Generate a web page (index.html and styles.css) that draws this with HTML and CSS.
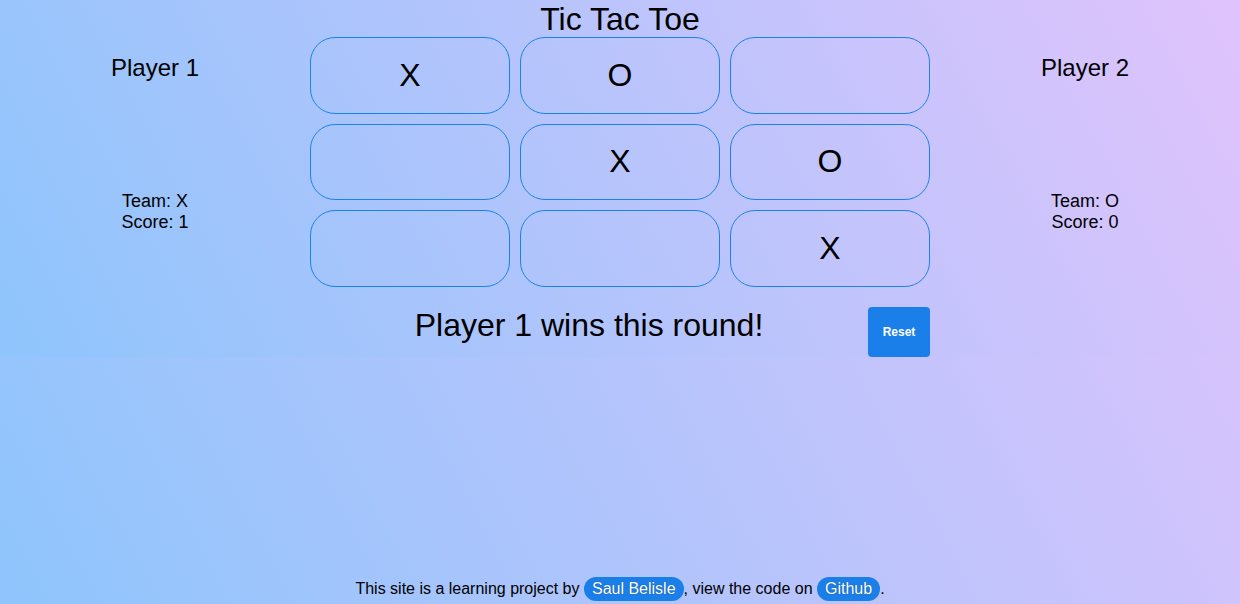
FILE: index.html
```html
<!DOCTYPE html>
<html lang="en">
<head>
<meta charset="utf-8">
<title>Tic Tac Toe</title>
<link rel="stylesheet" href="styles.css">
</head>
<body>
<main class="game">
  <h1 class="title">Tic Tac Toe</h1>
  <div class="layout">
    <aside class="player">
      <h2 class="player-name">Player 1</h2>
      <div class="stats">
        <div>Team: X</div>
        <div>Score: 1</div>
      </div>
    </aside>
    <section class="board">
      <div class="grid">
        <button class="cell">X</button>
        <button class="cell">O</button>
        <button class="cell"></button>
        <button class="cell"></button>
        <button class="cell">X</button>
        <button class="cell">O</button>
        <button class="cell"></button>
        <button class="cell"></button>
        <button class="cell">X</button>
      </div>
      <div class="status-row">
        <p class="message">Player 1 wins this round!</p>
        <button class="reset">Reset</button>
      </div>
    </section>
    <aside class="player">
      <h2 class="player-name">Player 2</h2>
      <div class="stats">
        <div>Team: O</div>
        <div>Score: 0</div>
      </div>
    </aside>
  </div>
</main>
<footer class="footer">
  This site is a learning project by <a class="pill" href="#">Saul Belisle</a>, view the code on <a class="pill" href="#">Github</a>.
</footer>
</body>
</html>
```
FILE: styles.css
```css
html, body {
  margin: 0;
  padding: 0;
}
body {
  min-height: 100vh;
  display: flex;
  flex-direction: column;
  font-family: "Liberation Sans", Arial, sans-serif;
  color: #000;
  background: linear-gradient(62deg, #8ec5fc 0%, #e0c3fc 100%);
}
.game {
  background: linear-gradient(62deg, #8ec5fc 0%, #e0c3fc 100%);
}
.title {
  margin: 0;
  font-size: 32px;
  font-weight: normal;
  text-align: center;
  line-height: 37px;
  padding-top: 1px;
  height: 36px;
}
.layout {
  display: grid;
  grid-template-columns: 310px 620px 310px;
}
.player {
  text-align: center;
}
.player-name {
  margin: 16.5px 0 0;
  font-size: 24px;
  font-weight: normal;
  line-height: 28px;
}
.stats {
  margin-top: 109px;
  font-size: 18px;
  line-height: 21px;
}
.grid {
  display: grid;
  grid-template-columns: repeat(3, 200px);
  grid-auto-rows: 76.5px;
  gap: 10px;
}
.cell {
  box-sizing: border-box;
  background: transparent;
  border: 1px solid #1a82ee;
  border-radius: 25px;
  font-family: "Liberation Sans", Arial, sans-serif;
  font-size: 32px;
  color: #000;
  padding: 0;
}
.status-row {
  display: flex;
  align-items: flex-start;
  margin-top: 20.5px;
}
.message {
  flex: 1;
  margin: 0;
  text-align: center;
  font-size: 32px;
  line-height: 37px;
}
.reset {
  width: 62px;
  height: 50px;
  border: none;
  border-radius: 4px;
  background: #1a7fe8;
  color: #fff;
  font-family: "Liberation Sans", Arial, sans-serif;
  font-weight: bold;
  font-size: 12px;
  padding: 0;
}
.footer {
  margin-top: auto;
  text-align: center;
  font-size: 16px;
  line-height: 18px;
  padding-bottom: 3px;
}
.pill {
  display: inline-block;
  background: #1a7fe8;
  color: #fff;
  text-decoration: none;
  padding: 3px 8px;
  border-radius: 12px;
  text-shadow: 0 0 1px rgba(0, 0, 0, 0.5);
}
```
